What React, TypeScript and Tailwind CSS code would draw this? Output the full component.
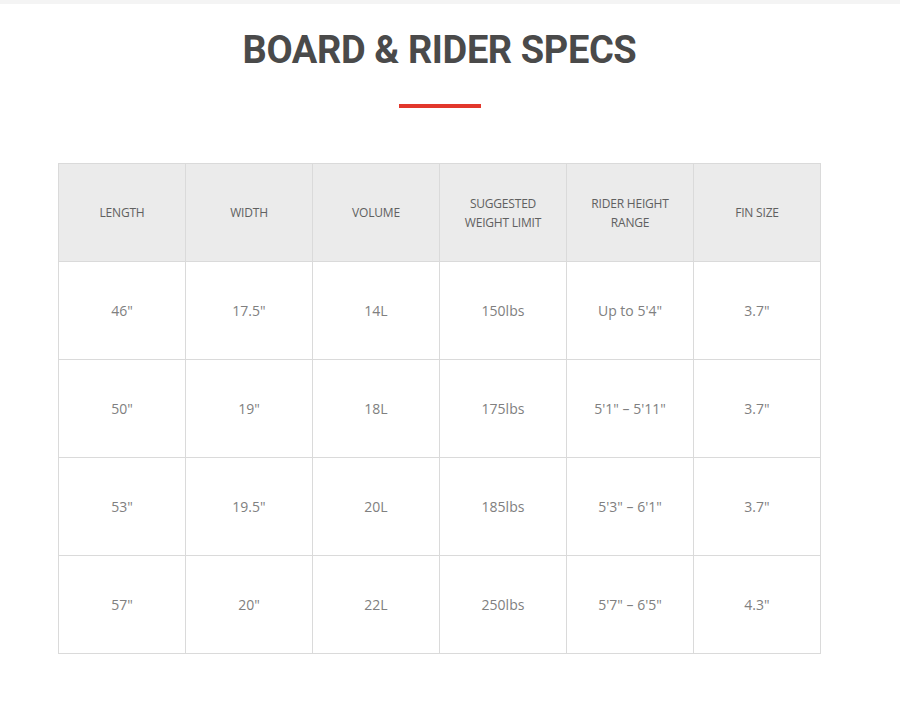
import React from 'react';

const headers = ['LENGTH', 'WIDTH', 'VOLUME', 'SUGGESTED WEIGHT LIMIT', 'RIDER HEIGHT RANGE', 'FIN SIZE'];

const rows = [
  ['46"', '17.5"', '14L', '150lbs', 'Up to 5\'4"', '3.7"'],
  ['50"', '19"', '18L', '175lbs', '5\'1" – 5\'11"', '3.7"'],
  ['53"', '19.5"', '20L', '185lbs', '5\'3" – 6\'1"', '3.7"'],
  ['57"', '20"', '22L', '250lbs', '5\'7" – 6\'5"', '4.3"'],
];

export default function App() {
  return (
    <div className="w-[900px] h-[703px] bg-white font-['Open_Sans',sans-serif]">
      <div className="h-[4px] bg-[#f4f4f4]" />
      <div className="w-[879px] flex flex-col items-center">
        <h1 className="mt-[26px] text-[38px] leading-[40px] font-bold tracking-[-0.4px] text-[#4a4a4a] font-['Roboto',sans-serif]">
          BOARD &amp; RIDER SPECS
        </h1>
        <div className="mt-[34px] w-[82px] h-[4px] bg-[#e2372c]" />
        <table className="mt-[55px] w-[763px] table-fixed border-collapse">
          <thead>
            <tr className="bg-[#ebebeb]">
              {headers.map((h) => (
                <th
                  key={h}
                  className="h-[98px] border border-[#dadada] px-4 text-[12px] leading-[19px] font-normal tracking-[-0.2px] text-[#606060]"
                >
                  {h}
                </th>
              ))}
            </tr>
          </thead>
          <tbody>
            {rows.map((r, i) => (
              <tr key={i}>
                {r.map((c, j) => (
                  <td
                    key={j}
                    className="h-[98px] border border-[#dadada] text-center text-[14px] text-[#808080]"
                  >
                    {c}
                  </td>
                ))}
              </tr>
            ))}
          </tbody>
        </table>
      </div>
    </div>
  );
}
